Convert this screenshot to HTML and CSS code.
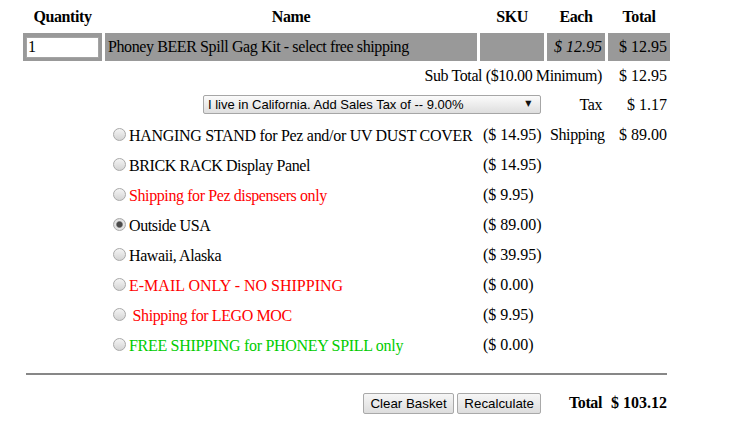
FILE: index.html
```html
<!DOCTYPE html>
<html>
<head>
<meta charset="utf-8">
<link rel="stylesheet" href="styles.css">
</head>
<body>
<table class="cart">
  <colgroup>
    <col class="c-qty"><col class="c-name"><col class="c-sku"><col class="c-each"><col class="c-total">
  </colgroup>
  <tr class="r-head">
    <th>Quantity</th><th>Name</th><th>SKU</th><th>Each</th><th>Total</th>
  </tr>
  <tr class="r-item">
    <td class="cell-qty"><input class="qty" type="text" value="1"></td>
    <td>Phoney BEER Spill Gag Kit - select free shipping</td>
    <td></td>
    <td class="right num each">$ 12.95</td>
    <td class="right num">$ 12.95</td>
  </tr>
  <tr class="r-sub">
    <td colspan="4" class="right">Sub Total ($10.00 Minimum)</td>
    <td class="right num">$ 12.95</td>
  </tr>
  <tr class="r-tax">
    <td colspan="3" class="right">
      <span class="select-wrap"><select class="tax-select"><option>I live in California. Add Sales Tax of -- 9.00%</option></select></span>
    </td>
    <td class="right">Tax</td>
    <td class="right num">$ 1.17</td>
  </tr>
  <tr class="r-ship">
    <td></td>
    <td class="opt"><input type="radio" name="ship" class="radio"><span class="caps">HANGING STAND for Pez and/or UV DUST COVER</span></td>
    <td class="price num">($ 14.95)</td>
    <td class="right">Shipping</td>
    <td class="right num">$ 89.00</td>
  </tr>
  <tr class="r-ship">
    <td></td>
    <td class="opt"><input type="radio" name="ship" class="radio">BRICK RACK Display Panel</td>
    <td class="price num">($ 14.95)</td>
    <td></td><td></td>
  </tr>
  <tr class="r-ship">
    <td></td>
    <td class="opt"><input type="radio" name="ship" class="radio"><span class="red">Shipping for Pez dispensers only</span></td>
    <td class="price num">($ 9.95)</td>
    <td></td><td></td>
  </tr>
  <tr class="r-ship">
    <td></td>
    <td class="opt"><input type="radio" name="ship" class="radio" checked>Outside USA</td>
    <td class="price num">($ 89.00)</td>
    <td></td><td></td>
  </tr>
  <tr class="r-ship">
    <td></td>
    <td class="opt"><input type="radio" name="ship" class="radio">Hawaii, Alaska</td>
    <td class="price num">($ 39.95)</td>
    <td></td><td></td>
  </tr>
  <tr class="r-ship">
    <td></td>
    <td class="opt"><input type="radio" name="ship" class="radio"><span class="red all-caps">E-MAIL ONLY - NO SHIPPING</span></td>
    <td class="price num">($ 0.00)</td>
    <td></td><td></td>
  </tr>
  <tr class="r-ship">
    <td></td>
    <td class="opt"><input type="radio" name="ship" class="radio"> <span class="red">Shipping for LEGO MOC</span></td>
    <td class="price num">($ 9.95)</td>
    <td></td><td></td>
  </tr>
  <tr class="r-ship">
    <td></td>
    <td class="opt"><input type="radio" name="ship" class="radio"><span class="green caps">FREE SHIPPING for PHONEY SPILL only</span></td>
    <td class="price num">($ 0.00)</td>
    <td></td><td></td>
  </tr>
  <tr class="r-rule">
    <td colspan="5"><hr class="rule"></td>
  </tr>
  <tr class="r-foot">
    <td colspan="3" class="right"><button class="btn">Clear Basket</button> <button class="btn">Recalculate</button></td>
    <td class="right bold">Total</td>
    <td class="right bold num">$ 103.12</td>
  </tr>
</table>
</body>
</html>
```

FILE: styles.css
```css
html, body {
  margin: 0;
  padding: 0;
  background: #ffffff;
}
body {
  font-family: "Liberation Serif", "Times New Roman", serif;
  font-size: 16px;
  color: #000;
}
.cart {
  margin-left: 20px;
  border-collapse: separate;
  border-spacing: 3px;
  table-layout: fixed;
  width: 653px;
  letter-spacing: -0.4px;
}
.c-qty { width: 79px; }
.c-name { width: 372px; }
.c-sku { width: 64px; }
.c-each { width: 58px; }
.c-total { width: 62px; }

.cart th, .cart td {
  padding: 0 3px;
  vertical-align: middle;
  white-space: nowrap;
  text-align: left;
}
.cart th {
  text-align: center;
  font-weight: bold;
}
.r-head th { height: 27px; }
.r-item td { height: 28px; background: #999999; }
.r-sub td { height: 24px; }
.r-tax td { height: 27px; }
.r-ship td { height: 27px; }
.r-rule td { height: 26px; }
.r-foot td { height: 26px; }

.cart td.right { text-align: right; }
.cart td.num { letter-spacing: 0; }
.caps { letter-spacing: -0.3px; }
.all-caps { letter-spacing: 0; }
.each { font-style: italic; }
.bold { font-weight: bold; }

.qty {
  box-sizing: border-box;
  width: 73px;
  height: 21px;
  margin: 0;
  padding: 0 1px;
  border: 1px solid #a4a4a4;
  background: #fff;
  font-family: "Liberation Serif", "Times New Roman", serif;
  font-size: 16px;
  letter-spacing: 0;
  display: block;
}

.select-wrap {
  position: relative;
  display: inline-block;
  vertical-align: middle;
}
.select-wrap::after {
  content: "\25BC";
  position: absolute;
  right: 10px;
  top: 4px;
  font-family: "DejaVu Sans", sans-serif;
  font-size: 8px;
  color: #111;
  pointer-events: none;
}
.tax-select {
  -webkit-appearance: none;
  appearance: none;
  box-sizing: border-box;
  width: 338px;
  height: 19px;
  margin: 0;
  padding: 0 0 0 4px;
  border: 1px solid #a6a6a6;
  border-radius: 2px;
  background: linear-gradient(#fbfbfb, #dedede);
  font-family: "Liberation Sans", Arial, sans-serif;
  font-size: 13px;
  letter-spacing: 0;
  color: #000;
  display: block;
}

.radio {
  -webkit-appearance: none;
  appearance: none;
  box-sizing: border-box;
  width: 13px;
  height: 13px;
  margin: 3px 3px 0 5px;
  border: 1px solid #a9a9a9;
  border-radius: 50%;
  background: linear-gradient(#f4f4f4, #d4d4d4);
}
.radio:checked {
  background: radial-gradient(circle, #4a4a4a 0, #4a4a4a 2.5px, #9a9a9a 3.2px, #e6e6e6 3.8px, #d4d4d4 100%);
}
.red { color: #ff0000; }
.green { color: #00cc00; }

.rule {
  margin: 0;
  border: none;
  height: 2px;
  background: #878787;
}

.btn {
  box-sizing: border-box;
  height: 21px;
  margin: 0;
  padding: 0 6px;
  border: 1px solid #a9a9a9;
  border-radius: 2px;
  background: linear-gradient(#f6f6f6, #dddddd);
  font-family: "Liberation Sans", Arial, sans-serif;
  font-size: 13.33px;
  letter-spacing: 0;
  color: #000;
  vertical-align: middle;
}
```
